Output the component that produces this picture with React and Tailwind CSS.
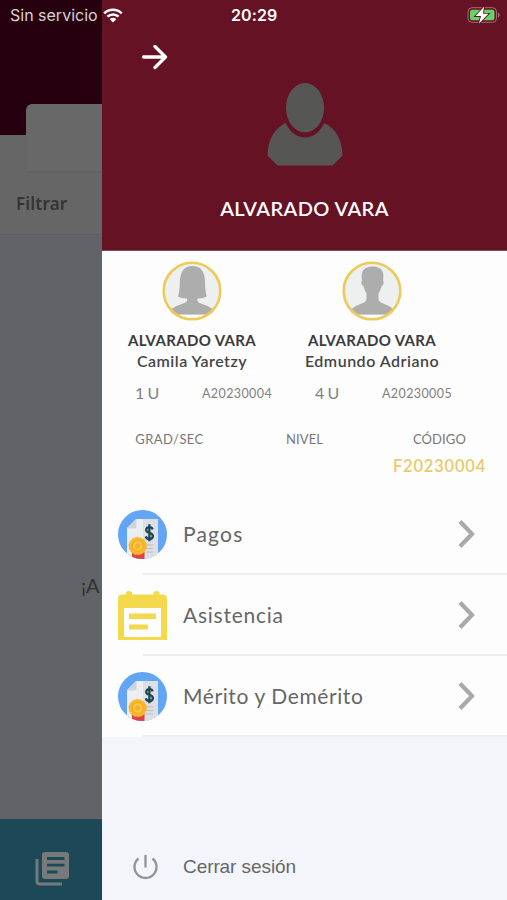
import React from 'react';

const STUDENTS = [
    { lastName: 'ALVARADO VARA', name: 'Camila Yaretzy', grade: '1 U', code: 'A20230004', gender: 'F', spacing: 'tracking-[0.5px]' },
    { lastName: 'ALVARADO VARA', name: 'Edmundo Adriano', grade: '4 U', code: 'A20230005', gender: 'M', spacing: 'tracking-[0.5px]' },
];

const MENU = [
    { label: 'Pagos', icon: 'invoice', spacing: 'tracking-[1.200px]' },
    { label: 'Asistencia', icon: 'calendar', spacing: 'tracking-[0.75px]' },
    { label: 'Mérito y Demérito', icon: 'invoice', spacing: 'tracking-[0.6px]' },
];

const InvoiceIcon = () => (
    <svg className="h-[49px] w-[49px]" viewBox="0 0 49 49">
        <defs>
            <clipPath id="disc"><circle cx="24.5" cy="24.5" r="24.5" /></clipPath>
        </defs>
        <g clipPath="url(#disc)">
            <rect width="49" height="49" fill="#62a4f6" />
            <path d="M9 18 18 9h22v40H9z" fill="#eceff1" />
            <path d="M25 9h15v40H25z" fill="#dcdfe3" />
            <path d="M9 18.500 18.500 9v7.500a2 2 0 0 1-2 2z" fill="#cfd4da" />
            <path d="M28 35h7M28 38.500h7M28 42h7" stroke="#b8bec4" strokeWidth="1.200" />
            <path d="M14 42h12.500v7H14z" fill="#d94347" />
            <circle cx="19.700" cy="36" r="8.800" fill="#fbb62a" stroke="#fbb62a" strokeWidth="0.800" strokeDasharray="2.500 1.400" />
            <circle cx="19.700" cy="36" r="5.500" fill="#fbc940" stroke="#f2a42b" strokeWidth="1" />
            <path d="m19.700 33 2.800 2.300-1 3.300h-3.600l-1-3.300z" fill="#f5ae2f" />
            <path
                d="M34.700 19.300c-.5-1.500-1.700-2.200-3.300-2.200-1.900 0-3.200 1.100-3.200 2.800 0 3.700 6.700 2 6.700 6 0 1.900-1.500 3-3.500 3-1.800 0-3.200-.9-3.600-2.500M31.400 14.300v17"
                fill="none"
                stroke="#1e4650"
                strokeWidth="2.300"
            />
        </g>
    </svg>
);

const CalendarIcon = () => (
    <svg className="h-[49px] w-[49px]" viewBox="0 0 49 49">
        <path d="M8 3.500V2q0-2 3-2t3 2v1.500h21.500V2q0-2 3-2t3 2v1.500H45q4 0 4 4V49H0V7.500q0-4 4-4zM6 17v29h37V17z" fill="#f4d94c" fillRule="evenodd" />
        <path d="M11 22.500h27V28H11zM11 33.500h19V38.500H11z" fill="#f4d94c" />
    </svg>
);

const StudentAvatar = ({ gender }) => (
    <svg className="h-[60px] w-[60px]" viewBox="0 0 60 60">
        <circle cx="30" cy="30" r="29" fill="#fff" />
        <path d="M4 20Q11 3 30 3t26 17q5 18-6 34H10Q-1 38 4 20z" fill="#eeefef" />
        {gender === 'F' ? (
            <path d="M16 35.500q1.600-4.500 1.800-14Q18 5 30.500 5T43 21.500q.2 9.500 1.800 14-3.500 2.300-9.300 2-.7 3 1.500 4.300 8 2.500 13.500 6.200L46 53.500H14L9.500 48q5.500-3.700 13.500-6.200 2.800-1.300 2-4.300-5.500.3-9-2z" fill="#adadad" />
        ) : (
            <path d="M9.500 48q3.500-3.200 9-5 5.500-1.700 6-4.500v-6q-2-2.500-3-7.200-1.700-.4-2.200-3.300-.3-2 .7-2.200Q17.500 5.500 30.500 5.500T41 19.800q1 .2.700 2.200-.5 2.900-2.200 3.300-1 4.700-3 7.200v6q.5 2.800 6 4.500t8.500 5L46 53.500H14z" fill="#adadad" />
        )}
        <circle cx="30" cy="30" r="28.300" fill="none" stroke="#edcb59" strokeWidth="2.600" />
    </svg>
);

const Student = ({ student }) => (
    <div className="flex w-[180px] flex-col items-center">
        <StudentAvatar gender={student.gender} />
        <p className="mt-[9px] text-[15px] leading-[20px] font-bold tracking-[0.35px] whitespace-nowrap text-[#3b3b3b]">{student.lastName}</p>
        <p className={`mt-[1px] text-[16px] leading-[20px] font-semibold whitespace-nowrap text-[#454545] ${student.spacing}`}>{student.name}</p>
        <div className="mt-[11px] flex w-full items-center pl-[33px] text-[#808080]">
            <span className="w-[67px] text-[16px] leading-[20px] tracking-[-0.5px]">{student.grade}</span>
            <span className="mt-[2px] text-[12.500px] leading-[20px] tracking-[0.4px]">{student.code}</span>
        </div>
    </div>
);

const MenuRow = ({ item }) => (
    <div className="relative flex h-[81px] items-center pl-[16px]">
        {item.icon === 'invoice' ? <InvoiceIcon /> : <CalendarIcon />}
        <span className={`mt-[-2px] ml-[16px] flex-1 text-[21px] text-[#666] ${item.spacing}`}>{item.label}</span>
        <svg className="mt-[-2px] mr-[31px] h-[30px] w-[20px]" viewBox="0 0 20 30">
            <path d="m4 2.500 12 12.500L4 27.500" fill="none" stroke="#a9a9a9" strokeWidth="4.200" />
        </svg>
        <div className="absolute right-0 bottom-0 left-[41px] h-[2px] bg-[#eceff1]" />
    </div>
);

// The screen that stays dimmed behind the drawer
const Backdrop = () => (
    <div className="flex w-[102px] flex-col overflow-hidden bg-[#666]">
        <div className="h-[135px] bg-[#27000f]" />
        <div className="-mt-[31px] ml-[26px] h-[67px] rounded-tl-[6px] bg-[#686868] shadow-[0_1px_3px_rgba(0,0,0,0.08)]" />
        <div className="flex h-[64px] items-center border-b border-[#5c5e5e] pl-[16px]">
            <span className="mt-[2px] font-['Noto_Sans'] text-[17px] font-semibold tracking-[0.2px] text-[#343434]">Filtrar</span>
        </div>
        <div className="flex flex-1 justify-end bg-[#616366]">
            <span className="mt-[336px] h-[28px] w-[21px] overflow-hidden text-[20px] leading-[28px] whitespace-nowrap text-[#303133]">¡A</span>
        </div>
        <div className="h-[81px] bg-[#1d4857] pt-[33px] pl-[35px]">
            <svg className="h-[34px] w-[34px]" viewBox="0 0 34 34">
                <path d="M2 7v22.500q0 2.500 2.500 2.500H27" fill="none" stroke="#777a7b" strokeWidth="3" />
                <path d="M10 0h21q3 0 3 3v21q0 3-3 3H10q-3 0-3-3V3q0-3 3-3z" fill="#777a7b" />
                <path d="M12 6.500h17.500M12 13.200h17.500M12 20h10.500" stroke="#1d4857" strokeWidth="2.800" />
            </svg>
        </div>
    </div>
);

const StatusBar = () => (
    <div className="absolute top-0 left-0 flex h-[30px] w-full items-center font-[Inter] text-white">
        <span className="w-[103px] pl-[10px] text-[16px] whitespace-nowrap text-[#d8d2d4]">Sin servicio</span>
        <svg className="h-[15px] w-[20px]" viewBox="0 0 20 15">
            <path d="M1.200 5.300a12.600 12.600 0 0 1 17.600 0M4.400 8.700a8 8 0 0 1 11.200 0" fill="none" stroke="#fff" strokeWidth="2.500" />
            <path d="M6.700 11.200a4.700 4.700 0 0 1 6.600 0L10 14.600z" fill="#fff" />
        </svg>
        <span className="ml-[108px] text-[16px] font-semibold tracking-[0.1px]">20:29</span>
        <svg className="mr-[7px] ml-auto h-[18px] w-[33px]" viewBox="0 0 33 18">
            <rect x="1" y="1.700" width="28.500" height="14.600" rx="4" fill="none" stroke="#a56b78" />
            <path d="M31 6.500q1.700.8 1.700 2.500T31 11.500z" fill="#a56b78" />
            <rect x="3" y="3.700" width="24.500" height="10.600" rx="2.300" fill="#65d367" />
            <path d="m17 .8-8.500 9.200H14l-2 7.500 9.500-9.700H16z" fill="#fff" stroke="#651225" strokeWidth="1.800" paintOrder="stroke" />
        </svg>
    </div>
);

export default function App() {
    return (
        <div className="relative flex h-[900px] w-[507px] overflow-hidden font-[Lato,sans-serif]">
            <Backdrop />

            {/* Drawer */}
            <div className="flex w-[405px] flex-col bg-[#f4f5fa]">
                <div className="flex h-[251px] flex-col items-center border-b border-[#8c4b5b] bg-[#651225]">
                    <div className="h-[83px] w-full pt-[44px] pl-[40px]">
                        <svg className="h-[26px] w-[26px]" viewBox="0 0 26 26">
                            <path d="M1.500 13H23M13 2.500 23.500 13 13 23.500" fill="none" stroke="#fff" strokeWidth="3.300" strokeLinecap="round" strokeLinejoin="round" />
                        </svg>
                    </div>
                    <svg className="h-[83px] w-[76px] shrink-0" viewBox="0 0 76 83">
                        <ellipse cx="38" cy="24.700" rx="19" ry="24.700" fill="#565755" />
                        <path d="M18.500 40Q26 54.500 38 54.500T57.500 40Q75 49 75.500 72.500L65.500 82.500h-55L.5 72.500Q1 49 18.500 40z" fill="#565755" />
                    </svg>
                    <h1 className="mt-[29px] text-[20px] leading-[26px] font-semibold tracking-[0.4px] text-white">ALVARADO VARA</h1>
                </div>

                <div className="bg-[#fdfdfe]">
                    <div className="flex pt-[10px]">
                        {STUDENTS.map((student) => (
                            <Student key={student.code} student={student} />
                        ))}
                    </div>

                    <div className="mt-[26px] flex h-[64px] text-[13px] leading-[18px] text-[#777]">
                        <span className="w-[135px] text-center tracking-[0.4px]">GRAD/SEC</span>
                        <span className="w-[135px] text-center tracking-[0.1px]">NIVEL</span>
                        <div className="flex w-[135px] flex-col items-center">
                            <span className="tracking-[0.1px]">CÓDIGO</span>
                            <span className="mt-[8px] text-[16.500px] leading-[20px] font-semibold tracking-[0.8px] text-[#e9ca6b]">F20230004</span>
                        </div>
                    </div>

                    <div>
                        {MENU.map((item) => (
                            <MenuRow key={item.label} item={item} />
                        ))}
                    </div>
                </div>

                <div className="mt-auto flex h-[66px] items-start pl-[31px]">
                    <svg className="mt-[20px] h-[26px] w-[25px]" viewBox="0 0 25 26">
                        <path d="M5.500 4.500a11 11 0 1 0 14 0M12.500 1v12.500" fill="none" stroke="#929497" strokeWidth="2.300" />
                    </svg>
                    <span className="mt-[19px] ml-[25px] font-['Liberation_Sans'] text-[19px] leading-[28px] tracking-[-0.080px] text-[#666769]">Cerrar sesión</span>
                </div>
            </div>

            <StatusBar />
        </div>
    );
}
